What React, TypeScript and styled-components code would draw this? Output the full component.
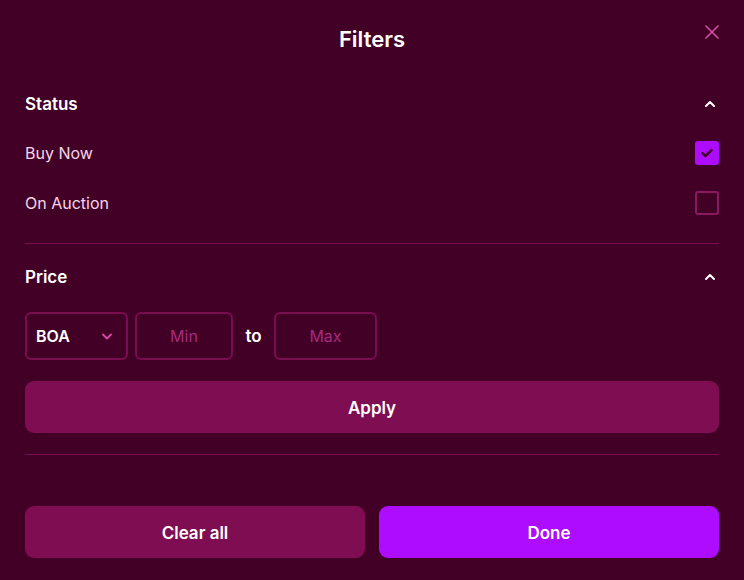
import React, { useState } from "react";
import styled, { createGlobalStyle } from "styled-components";

const Global = createGlobalStyle`
  html, body { margin: 0; padding: 0; background: #420027; }
  body { font-family: Inter, "Noto Sans", sans-serif; color: #fff; }
  * { box-sizing: border-box; }
`;

const Panel = styled.div`
  width: 744px;
  height: 580px;
  background: #420027;
  padding: 0 25px;
  display: flex;
  flex-direction: column;
  position: relative;
`;

const Header = styled.div`
  height: 78px;
  display: flex;
  align-items: center;
  justify-content: center;
`;

const Title = styled.h1`
  margin: 0;
  font-size: 22px;
  font-weight: 600;
  color: #fff;
`;

const Close = styled.button`
  position: absolute;
  top: 22px;
  right: 22px;
  width: 20px;
  height: 20px;
  padding: 0;
  border: none;
  background: none;
  display: flex;
  align-items: center;
  justify-content: center;
`;

const Section = styled.section<{ $border?: boolean }>`
  display: flex;
  flex-direction: column;
  border-bottom: ${(p) => (p.$border ? "1px solid #7a0d50" : "none")};
`;

const SectionHead = styled.div<{ $offset?: number }>`
  height: 50px;
  margin-top: ${(p) => p.$offset ?? 0}px;
  padding-top: 1px;
  display: flex;
  align-items: center;
  justify-content: space-between;
  svg { margin-right: 2px; }
`;

const SectionTitle = styled.h2`
  margin: 0;
  font-size: 17px;
  font-weight: 600;
  color: #fff;
`;

const Row = styled.label`
  height: 50px;
  display: flex;
  align-items: center;
  justify-content: space-between;
  font-size: 16px;
  color: #f6d6ea;
`;

const Box = styled.span<{ $checked: boolean }>`
  width: 24px;
  height: 24px;
  border-radius: 3px;
  display: flex;
  align-items: center;
  justify-content: center;
  background: ${(p) => (p.$checked ? "#ad0cff" : "transparent")};
  border: ${(p) => (p.$checked ? "none" : "2px solid #8a1a5e")};
`;

const StatusBody = styled.div`
  display: flex;
  flex-direction: column;
  padding-bottom: 15px;
`;

const PriceBody = styled.div`
  display: flex;
  flex-direction: column;
  gap: 21px;
  padding-top: 11px;
  padding-bottom: 21px;
`;

const Inputs = styled.div`
  display: flex;
  align-items: center;
`;

const Select = styled.div`
  width: 103px;
  height: 48px;
  border: 2px solid #7a0d50;
  border-radius: 6px;
  display: flex;
  align-items: center;
  justify-content: space-between;
  padding: 0 13px 0 9px;
  font-size: 16px;
  font-weight: 600;
  color: #fff;
`;

const Field = styled.input<{ $w: number; $ml?: number }>`
  width: ${(p) => p.$w}px;
  margin-left: ${(p) => p.$ml ?? 0}px;
  height: 48px;
  border: 2px solid #7a0d50;
  border-radius: 6px;
  background: transparent;
  text-align: center;
  font-family: Inter, "Noto Sans", sans-serif;
  font-size: 16px;
  color: #fff;
  outline: none;
  &::placeholder { color: #a62a7c; }
`;

const To = styled.span`
  font-size: 17px;
  font-weight: 600;
  color: #fff;
  width: 41px;
  text-align: center;
`;

const Btn = styled.button<{ $primary?: boolean }>`
  flex: 1;
  height: 52px;
  padding: 2px 0 0;
  border: none;
  border-radius: 9px;
  background: ${(p) => (p.$primary ? "#ad0cff" : "#7f0d52")};
  color: #fff;
  font-family: Inter, "Noto Sans", sans-serif;
  font-size: 17px;
  font-weight: 600;
`;

const Footer = styled.div`
  display: flex;
  gap: 14px;
  margin-top: 51px;
`;

const Chevron = () => (
  <svg width="14" height="14" viewBox="0 0 14 14" fill="none">
    <path d="M3 9l4-4 4 4" stroke="#fff" strokeWidth="2" strokeLinecap="round" strokeLinejoin="round" />
  </svg>
);

export default function App() {
  const [buy, setBuy] = useState(true);
  const [auc, setAuc] = useState(false);
  return (
    <>
      <Global />
      <Panel>
        <Header>
          <Title>Filters</Title>
          <Close aria-label="close">
            <svg width="14" height="14" viewBox="0 0 14 14">
              <path d="M1 1l12 12M13 1L1 13" stroke="#d84aa8" strokeWidth="1.6" strokeLinecap="round" />
            </svg>
          </Close>
        </Header>
        <Section $border>
          <SectionHead>
            <SectionTitle>Status</SectionTitle>
            <Chevron />
          </SectionHead>
          <StatusBody>
            <Row onClick={() => setBuy(!buy)}>
              Buy Now
              <Box $checked={buy}>
                {buy && (
                  <svg width="16" height="16" viewBox="0 0 16 16" fill="none">
                    <path d="M3.5 8.2l3 3 6-6" stroke="#420027" strokeWidth="2.6" strokeLinecap="round" strokeLinejoin="round" />
                  </svg>
                )}
              </Box>
            </Row>
            <Row onClick={() => setAuc(!auc)}>
              On Auction
              <Box $checked={auc} />
            </Row>
          </StatusBody>
        </Section>
        <Section $border>
          <SectionHead $offset={7}>
            <SectionTitle>Price</SectionTitle>
            <Chevron />
          </SectionHead>
          <PriceBody>
            <Inputs>
              <Select>
                BOA
                <svg width="12" height="12" viewBox="0 0 12 12" fill="none">
                  <path d="M2 4.5L6 8.5l4-4" stroke="#d84aa8" strokeWidth="1.8" strokeLinecap="round" strokeLinejoin="round" />
                </svg>
              </Select>
              <Field placeholder="Min" $w={98} $ml={7} />
              <To>to</To>
              <Field placeholder="Max" $w={103} />
            </Inputs>
            <Inputs>
              <Btn>Apply</Btn>
            </Inputs>
          </PriceBody>
        </Section>
        <Footer>
          <Btn>Clear all</Btn>
          <Btn $primary>Done</Btn>
        </Footer>
      </Panel>
    </>
  );
}
